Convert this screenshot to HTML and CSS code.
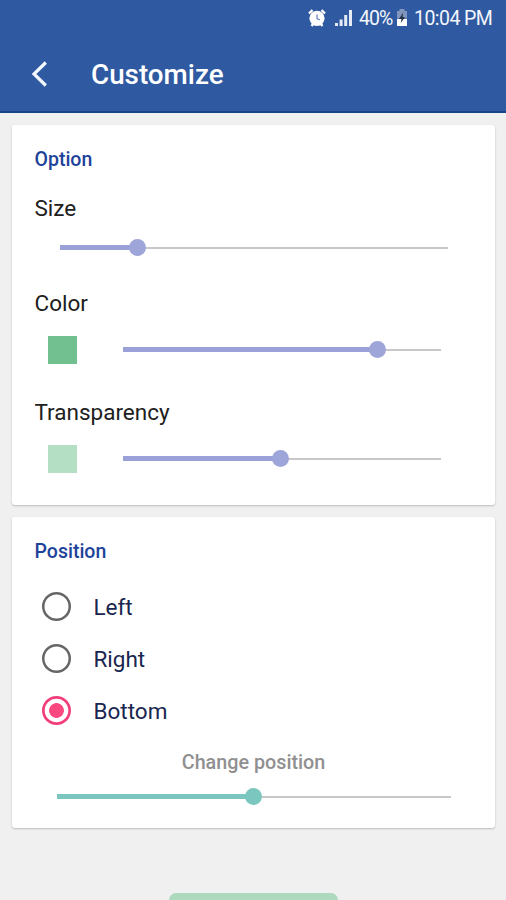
FILE: index.html
```html
<!DOCTYPE html>
<html lang="en">
<head>
<meta charset="utf-8">
<title>Customize</title>
<link rel="stylesheet" href="styles.css">
</head>
<body>
<header class="appbar">
  <div class="status">
    <svg class="alarm" width="18" height="18" viewBox="0 0 18 18"><circle cx="9" cy="9.300" r="7.600" fill="#fff"/><path d="M1 4.500L4.500 1.200M17 4.500L13.500 1.200M3.500 17L5.500 14.500M14.500 17L12.500 14.500" stroke="#fff" stroke-width="2.400"/><path d="M9 5.500v4l2.800 1.300" fill="none" stroke="#6d8bc0" stroke-width="1.300"/></svg>
    <svg class="signal" width="18" height="18" viewBox="0 0 18 18" fill="#e6ecf7"><path d="M0 14h3v3H0zM4.600 10.500h3V17h-3zM9.200 6h3v11h-3zM14 1h3v16h-3z"/></svg>
    <span class="percent">40%</span>
    <svg class="battery" width="12" height="18" viewBox="0 0 12 18"><path d="M3.500 0h5v2H11v7.500H1V2h2.500z" fill="#8195bd"/><path d="M1 10h10v7H1z" fill="#fff"/><path d="M7.200 3.500L3 10h2.500L4.800 14 9 8H6.500z" fill="#253047"/></svg>
    <span class="time">10:04 PM</span>
  </div>
  <div class="titlebar">
    <svg class="back" width="18" height="28" viewBox="0 0 18 28"><path d="M15.800 2.500L4 14l11.800 11.500" fill="none" stroke="#f4f8ff" stroke-width="3.200"/></svg>
    <h1>Customize</h1>
  </div>
</header>
<main>
  <section class="card option">
    <h2>Option</h2>
    <div class="label size">Size</div>
    <div class="slider wide"><i class="fill" style="width:20%"></i><i class="thumb"></i><i class="rest"></i></div>
    <div class="label color">Color</div>
    <div class="row"><i class="swatch"></i><div class="slider"><i class="fill" style="width:80%"></i><i class="thumb"></i><i class="rest"></i></div></div>
    <div class="label transparency">Transparency</div>
    <div class="row"><i class="swatch pale"></i><div class="slider"><i class="fill" style="width:49.600%"></i><i class="thumb"></i><i class="rest"></i></div></div>
  </section>
  <section class="card position">
    <h2>Position</h2>
    <div class="radios">
      <div class="radio"><i class="ring"></i><span>Left</span></div>
      <div class="radio"><i class="ring"></i><span>Right</span></div>
      <div class="radio checked"><i class="ring"></i><span>Bottom</span></div>
    </div>
    <div class="caption">Change position</div>
    <div class="slider teal"><i class="fill" style="width:50%"></i><i class="thumb"></i><i class="rest"></i></div>
  </section>
</main>
<div class="handle"></div>
</body>
</html>
```

FILE: styles.css
```css
* { box-sizing: border-box; }
body {
  margin: 0;
  height: 900px;
  overflow: hidden;
  display: flex;
  flex-direction: column;
  background: #f0f0f0;
  font-family: Roboto, sans-serif;
}
i { display: block; flex: none; }
svg { display: block; flex: none; }
h1, h2 { margin: 0; font-weight: 500; white-space: nowrap; }
.appbar {
  height: 113px;
  flex: none;
  background: #2f5aa1;
  border-bottom: 2px solid #164688;
  color: #fff;
}
.status {
  height: 36px;
  display: flex;
  align-items: center;
  justify-content: flex-end;
  padding-right: 14px;
  font-size: 19.500px;
  color: #f3f6fc;
}
.signal { margin-left: 9px; }
.percent { margin-left: 6px; width: 34px; letter-spacing: -1px; white-space: nowrap; }
.battery { margin-left: 3px; }
.time { margin-left: 6px; width: 78px; letter-spacing: -0.550px; white-space: nowrap; }
.titlebar { height: 76px; display: flex; align-items: center; padding-left: 30px; }
.back { margin-top: -1px; }
h1 { margin: 2px 0 0 43px; font-size: 27.800px; line-height: 36px; }
main { display: flex; flex-direction: column; gap: 12px; padding: 12px 11px 0 12px; flex: none; }
.card {
  background: #fff;
  border-radius: 3px;
  padding: 21px 22px 0 22px;
  box-shadow: 0 1px 2px rgba(0, 0, 0, 0.22);
}
.option { height: 380px; }
.position { height: 311px; }
h2 { padding-left: 0.500px; font-size: 19.500px; line-height: 28px; color: #1e439a; }
.label { padding-left: 0.500px; font-size: 22.500px; line-height: 28px; color: #202020; }
.size { margin-top: 20px; }
.slider { display: flex; align-items: center; height: 27px; width: 318px; }
.wide { width: 388px; margin: 12px 0 0 25.500px; }
.fill { height: 5.500px; background: #9aa1d8; }
.thumb { width: 17px; height: 17px; margin: 0 -8.500px; border-radius: 50%; background: #9ea5d8; z-index: 1; }
.rest { flex: 1; height: 2px; background: #c8c8cb; }
.color { margin-top: 28px; }
.transparency { margin-top: 34px; }
.row { display: flex; align-items: center; margin: 19px 0 0 14px; height: 28px; }
.row .slider { margin-top: -1px; }
.swatch { width: 28.500px; height: 28px; margin-right: 46.500px; background: #72bf90; }
.pale { background: #b5dfc4; }
.radios { margin: 14.500px 0 0 8px; }
.radio { display: flex; align-items: center; height: 52px; gap: 22.500px; font-size: 22.500px; color: #19264f; }
.ring { width: 29px; height: 29px; border-radius: 50%; box-shadow: inset 0 0 0 2.500px #666; }
.checked .ring { box-shadow: inset 0 0 0 2.700px #f23f79; background: radial-gradient(circle, #fb4880 7px, #fff 7.700px); }
.caption { margin-top: 12px; text-align: center; font-size: 19.750px; line-height: 28px; color: #909090; font-weight: 500; }
.teal { width: 394px; margin: 6.500px 0 0 22.500px; }
.teal .fill, .teal .thumb { background: #7bc7bf; }
.handle { width: 169px; height: 20px; margin: 65px 0 0 169px; flex: none; border-radius: 7px; background: #add9bf; }
```
